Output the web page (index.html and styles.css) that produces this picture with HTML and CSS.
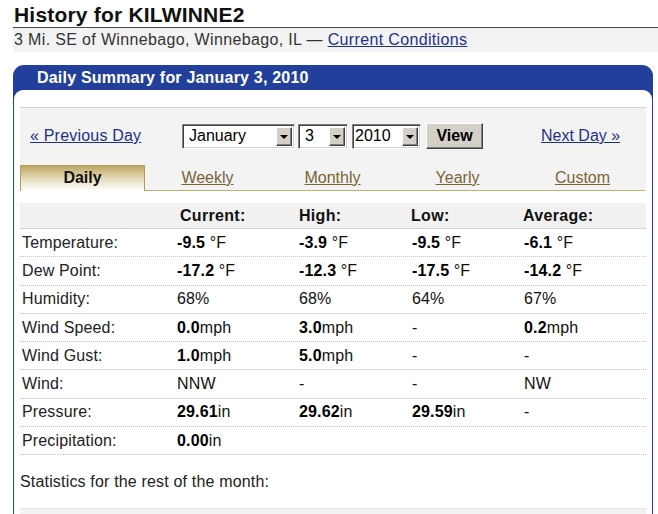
FILE: index.html
```html
<!DOCTYPE html>
<html>
<head>
<meta charset="utf-8">
<link rel="stylesheet" href="styles.css">
</head>
<body>
<div class="page">
  <h1 class="title">History for KILWINNE2</h1>
  <div class="subtitle">3 Mi. SE of Winnebago, Winnebago, IL — <a class="link" href="#">Current Conditions</a></div>

  <div class="box">
    <div class="box-head">Daily Summary for January 3, 2010</div>
    <div class="box-body">
      <div class="panel">
        <div class="nav">
          <a class="link prev" href="#">« Previous Day</a>
          <div class="select sel-month"><span class="sel-text">January</span><span class="sel-btn"><span class="tri"></span></span></div>
          <div class="select sel-day"><span class="sel-text">3</span><span class="sel-btn"><span class="tri"></span></span></div>
          <div class="select sel-year"><span class="sel-text">2010</span><span class="sel-btn"><span class="tri"></span></span></div>
          <div class="btn">View</div>
          <a class="link next" href="#">Next Day »</a>
        </div>
        <div class="tabs">
          <div class="tab active">Daily</div>
          <div class="tab"><a class="tab-link" href="#">Weekly</a></div>
          <div class="tab"><a class="tab-link" href="#">Monthly</a></div>
          <div class="tab"><a class="tab-link" href="#">Yearly</a></div>
          <div class="tab"><a class="tab-link" href="#">Custom</a></div>
        </div>
      </div>

      <div class="stats">
        <div class="row head">
          <div class="c lab"></div>
          <div class="c cur">Current:</div>
          <div class="c hi">High:</div>
          <div class="c lo">Low:</div>
          <div class="c av">Average:</div>
        </div>
        <div class="row">
          <div class="c lab">Temperature:</div>
          <div class="c"><b>-9.5</b> °F</div>
          <div class="c"><b>-3.9</b> °F</div>
          <div class="c"><b>-9.5</b> °F</div>
          <div class="c"><b>-6.1</b> °F</div>
        </div>
        <div class="row">
          <div class="c lab">Dew Point:</div>
          <div class="c"><b>-17.2</b> °F</div>
          <div class="c"><b>-12.3</b> °F</div>
          <div class="c"><b>-17.5</b> °F</div>
          <div class="c"><b>-14.2</b> °F</div>
        </div>
        <div class="row">
          <div class="c lab">Humidity:</div>
          <div class="c">68%</div>
          <div class="c">68%</div>
          <div class="c">64%</div>
          <div class="c">67%</div>
        </div>
        <div class="row">
          <div class="c lab">Wind Speed:</div>
          <div class="c"><b>0.0</b>mph</div>
          <div class="c"><b>3.0</b>mph</div>
          <div class="c">-</div>
          <div class="c"><b>0.2</b>mph</div>
        </div>
        <div class="row">
          <div class="c lab">Wind Gust:</div>
          <div class="c"><b>1.0</b>mph</div>
          <div class="c"><b>5.0</b>mph</div>
          <div class="c">-</div>
          <div class="c">-</div>
        </div>
        <div class="row">
          <div class="c lab">Wind:</div>
          <div class="c">NNW</div>
          <div class="c">-</div>
          <div class="c">-</div>
          <div class="c">NW</div>
        </div>
        <div class="row">
          <div class="c lab">Pressure:</div>
          <div class="c"><b>29.61</b>in</div>
          <div class="c"><b>29.62</b>in</div>
          <div class="c"><b>29.59</b>in</div>
          <div class="c">-</div>
        </div>
        <div class="row">
          <div class="c lab">Precipitation:</div>
          <div class="c"><b>0.00</b>in</div>
          <div class="c"></div>
          <div class="c"></div>
          <div class="c"></div>
        </div>
      </div>

      <p class="rest">Statistics for the rest of the month:</p>
      <div class="panel2"></div>
    </div>
  </div>
</div>
</body>
</html>
```

FILE: styles.css
```css
html, body {
  margin: 0;
  padding: 0;
  background: #fff;
}
body {
  font-family: "Liberation Sans", Arial, sans-serif;
  font-size: 16px;
  color: #222;
  overflow: hidden;
  height: 514px;
}
.page {
  padding-left: 13px;
}
.title {
  margin: 3px 0 0 0;
  font-size: 21px;
  line-height: 24px;
  font-weight: bold;
  color: #111;
  border-bottom: 1px solid #4a4a4a;
  padding-left: 1px;
  letter-spacing: 0.2px;
}
.subtitle {
  background: #f3f3f3;
  line-height: 24px;
  color: #333;
  padding-left: 1px;
  letter-spacing: 0.35px;
}
.link {
  color: #1d3188;
  text-decoration: underline;
}
.box {
  margin-top: 13px;
  margin-right: 5px;
  background: #22409b;
  border-radius: 11px 11px 0 0;
  padding: 0 1px;
}
.box-head {
  height: 25px;
  line-height: 25px;
  color: #fff;
  font-weight: bold;
  padding-left: 23px;
  letter-spacing: 0.2px;
}
.box-body {
  background: #fff;
  border-radius: 9px 9px 0 0;
  padding: 17px 6px 0 6px;
  height: 407px;
  overflow: hidden;
}
.panel {
  background: #f3f3f4;
  border-top: 1px solid #d4d4d4;
}
.nav {
  display: flex;
  align-items: center;
  padding: 15px 0 16px 10px;
}
.prev {
  width: 152px;
  flex: none;
  letter-spacing: 0.2px;
}
.select {
  box-sizing: border-box;
  height: 25px;
  background: #fff;
  border-top: 1px solid #808080;
  border-left: 1px solid #808080;
  border-bottom: 1px solid #fff;
  border-right: 1px solid #fff;
  box-shadow: inset 1px 1px 0 #404040, inset -1px -1px 0 #d4d0c8;
  display: flex;
  align-items: center;
  justify-content: space-between;
  padding: 0 2px 0 6px;
  color: #000;
  flex: none;
}
.sel-month { width: 113px; }
.sel-day { width: 50px; margin-left: 3px; }
.sel-year { width: 69px; margin-left: 4px; padding-left: 2px; }
.sel-btn {
  box-sizing: border-box;
  width: 16px;
  height: 19px;
  background: #d4d0c8;
  border-top: 1px solid #fff;
  border-left: 1px solid #fff;
  border-bottom: 1px solid #404040;
  border-right: 1px solid #404040;
  box-shadow: inset -1px -1px 0 #808080;
  display: flex;
  align-items: center;
  justify-content: center;
}
.tri {
  width: 0;
  height: 0;
  border-left: 4px solid transparent;
  border-right: 4px solid transparent;
  border-top: 4px solid #000;
  margin-top: 1px;
}
.btn {
  box-sizing: border-box;
  width: 57px;
  height: 26px;
  margin-left: 5px;
  background: #d4d0c8;
  border-top: 1px solid #fff;
  border-left: 1px solid #fff;
  border-bottom: 1px solid #404040;
  border-right: 1px solid #404040;
  box-shadow: inset -1px -1px 0 #808080;
  font-weight: bold;
  color: #000;
  text-align: center;
  line-height: 24px;
  flex: none;
}
.next {
  margin-left: 58px;
}
.tabs {
  display: flex;
  background: #f3f3f4;
}
.tab {
  box-sizing: border-box;
  width: 125px;
  height: 26px;
  line-height: 25px;
  text-align: center;
  border-bottom: 1px solid #c2ae6e;
}
.tab.active {
  background: linear-gradient(to bottom, #bea764 0%, #e9e0c2 55%, #ffffff 100%);
  border: 1px solid #b39c58;
  border-bottom: none;
  font-weight: bold;
  color: #111;
  line-height: 24px;
}
.tab-link {
  color: #7a6434;
  text-decoration: underline;
}
.stats {
  margin-top: 12px;
}
.row {
  display: grid;
  grid-template-columns: 157px 122px 113px 112px 1fr;
  box-sizing: border-box;
  height: 28.3px;
  align-items: center;
  border-bottom: 1px dotted #c4c4c4;
  color: #111;
  letter-spacing: 0.15px;
}
.row.head {
  height: 26px;
  background: #f1f1f1;
  font-weight: bold;
  color: #111;
  border-bottom: 1px solid #d0d0d0;
  letter-spacing: 0.3px;
}
.c {
  line-height: 18px;
  white-space: nowrap;
}
.lab {
  padding-left: 2px;
  color: #222;
}
.head .cur { padding-left: 3px; }
.head .lo, .head .av { margin-left: -1px; }
.row b {
  color: #000;
}
.rest {
  margin: 18px 0 17px 0;
  line-height: 18px;
  color: #222;
  letter-spacing: 0.17px;
}
.panel2 {
  background: #f3f3f4;
  height: 40px;
  border-top: 1px solid #e4e4e4;
}
```
